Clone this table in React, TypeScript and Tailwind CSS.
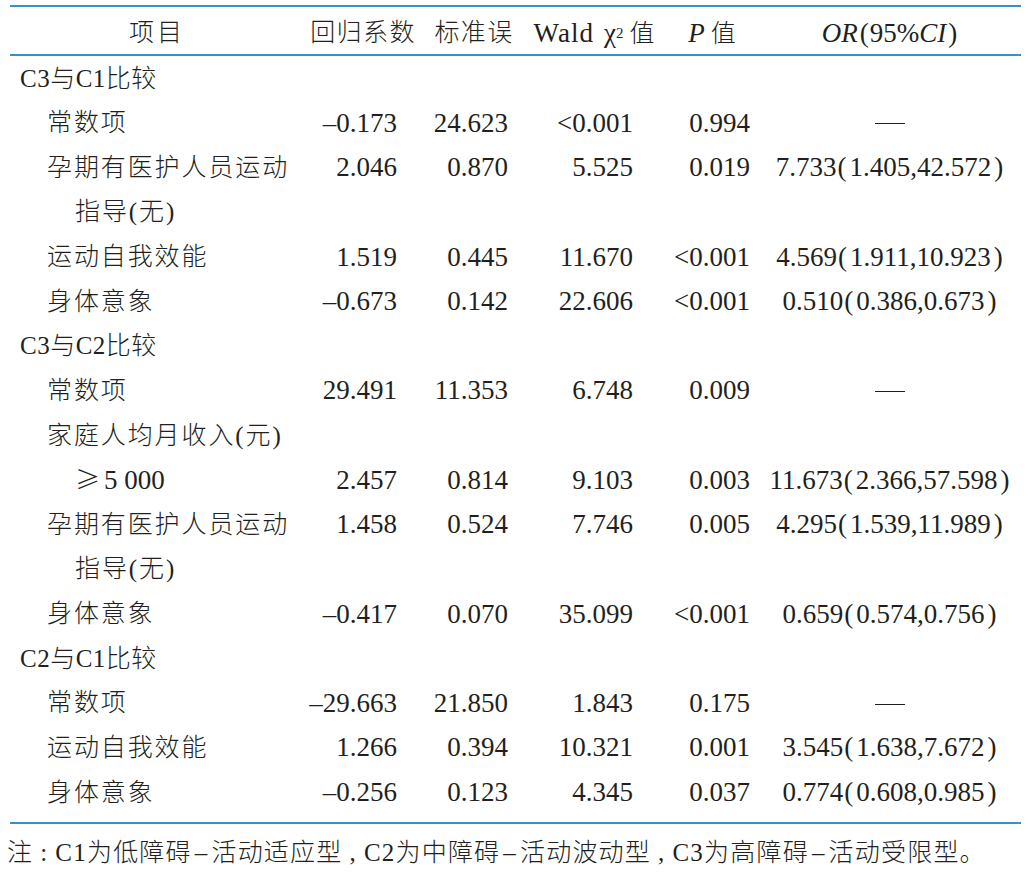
import React from "react";

type Row = {
  label: React.ReactNode;
  level: 0 | 1 | 2;
  b?: string;
  se?: string;
  wald?: string;
  p?: string;
  or?: string;
};

const rows: Row[] = [
  { label: "C3与C1比较", level: 0 },
  { label: "常数项", level: 1, b: "–0.173", se: "24.623", wald: "<0.001", p: "0.994", or: "—" },
  { label: "孕期有医护人员运动", level: 1, b: "2.046", se: "0.870", wald: "5.525", p: "0.019", or: "7.733(1.405,42.572)" },
  { label: "指导(无)", level: 2 },
  { label: "运动自我效能", level: 1, b: "1.519", se: "0.445", wald: "11.670", p: "<0.001", or: "4.569(1.911,10.923)" },
  { label: "身体意象", level: 1, b: "–0.673", se: "0.142", wald: "22.606", p: "<0.001", or: "0.510(0.386,0.673)" },
  { label: "C3与C2比较", level: 0 },
  { label: "常数项", level: 1, b: "29.491", se: "11.353", wald: "6.748", p: "0.009", or: "—" },
  { label: "家庭人均月收入(元)", level: 1 },
  {
    label: (
      <>
        <span className="font-['Noto_Sans_CJK_SC',sans-serif] mr-[2px]">≥</span>
        <span className="font-['Liberation_Serif',serif] text-[27px] tracking-normal">5 000</span>
      </>
    ),
    level: 2,
    b: "2.457",
    se: "0.814",
    wald: "9.103",
    p: "0.003",
    or: "11.673(2.366,57.598)",
  },
  { label: "孕期有医护人员运动", level: 1, b: "1.458", se: "0.524", wald: "7.746", p: "0.005", or: "4.295(1.539,11.989)" },
  { label: "指导(无)", level: 2 },
  { label: "身体意象", level: 1, b: "–0.417", se: "0.070", wald: "35.099", p: "<0.001", or: "0.659(0.574,0.756)" },
  { label: "C2与C1比较", level: 0 },
  { label: "常数项", level: 1, b: "–29.663", se: "21.850", wald: "1.843", p: "0.175", or: "—" },
  { label: "运动自我效能", level: 1, b: "1.266", se: "0.394", wald: "10.321", p: "0.001", or: "3.545(1.638,7.672)" },
  { label: "身体意象", level: 1, b: "–0.256", se: "0.123", wald: "4.345", p: "0.037", or: "0.774(0.608,0.985)" },
];

const cjk = "font-['Liberation_Serif','Noto_Sans_CJK_SC',serif] font-light text-[25px]";
const num = "font-['Liberation_Serif',serif] text-[27px]";
const grid = "grid grid-cols-[290px_126px_96px_144px_92px_263px]";

function ORCell({ v }: { v?: string }) {
  if (!v) return <div />;
  if (v === "—") {
    return (
      <div className="flex justify-center items-center">
        <span className="block w-[30px] h-[1px] bg-[#231f20] mt-[2px]" />
      </div>
    );
  }
  const m = v.match(/^([^(]+)\(([^)]+)\)$/);
  const head = m ? m[1] : v;
  const inner = m ? m[2] : "";
  return (
    <div className={`${num} text-center whitespace-nowrap`}>
      {head}
      <span className="ml-[1px] mr-[3px]">(</span>
      {inner}
      <span className="ml-[3px]">)</span>
    </div>
  );
}

export default function App() {
  return (
    <div className="w-[1031px] h-[881px] bg-white text-[#231f20] pt-[5px] px-[10px]">
      <div className="border-t-2 border-b-2 border-[#3a8fc9]">
        <div className={`${grid} h-[47px] pt-[5px] items-center`}>
          <div className={`${cjk} text-center tracking-[3px] pl-[4px]`}>项目</div>
          <div className={`${cjk} text-center tracking-[1.4px]`}>回归系数</div>
          <div className={`${cjk} text-center tracking-[1.4px]`}>标准误</div>
          <div className="text-center whitespace-nowrap">
            <span className={`${num} tracking-[1px]`}>Wald</span>
            <span className={`${num} ml-[10px]`}>χ</span>
            <sup className="font-['Liberation_Serif',serif] text-[15px] relative -top-[4px]">2</sup>
            <span className={`${cjk} ml-[6px]`}>值</span>
          </div>
          <div className="text-center whitespace-nowrap">
            <span className={`${num} italic`}>P</span>
            <span className={`${cjk} ml-[6px]`}>值</span>
          </div>
          <div className="text-center whitespace-nowrap">
            <span className={`${num} italic`}>OR</span>
            <span className={`${num} ml-[2px] mr-[1px]`}>(</span>
            <span className={num}>95%</span>
            <span className={`${num} italic`}>CI</span>
            <span className={`${num} ml-[2px]`}>)</span>
          </div>
        </div>
      </div>
      <div className="border-b-2 border-[#3a8fc9] pb-[7px]">
        {rows.map((r, i) => (
          <div key={i} className={`${grid} h-[44.625px] items-center`}>
            <div
              className={`${cjk} whitespace-nowrap ${
                r.level === 0
                  ? "pl-[10px] tracking-[0.5px]"
                  : r.level === 1
                  ? "pl-[37px] tracking-[1.9px]"
                  : "pl-[65px] tracking-[1.9px]"
              }`}
            >
              {r.label}
            </div>
            <div className={`${num} text-right pr-[29px]`}>{r.b}</div>
            <div className={`${num} text-right pr-[14px]`}>{r.se}</div>
            <div className={`${num} text-right pr-[33px]`}>{r.wald}</div>
            <div className={`${num} text-right pr-[8px]`}>{r.p}</div>
            <ORCell v={r.or} />
          </div>
        ))}
      </div>
      <div className="mt-[14px] -ml-[3px] font-['Liberation_Serif','Noto_Sans_CJK_SC',serif] font-light text-[25px] leading-[30px] whitespace-nowrap tracking-[1.2px]">
        注<span className="mx-[7px]">:</span>C1为低障碍<span className="mx-[3px]">–</span>活动适应型
        <span className="mx-[7px]">,</span>C2为中障碍<span className="mx-[3px]">–</span>活动波动型
        <span className="mx-[7px]">,</span>C3为高障碍<span className="mx-[3px]">–</span>活动受限型。
      </div>
    </div>
  );
}
